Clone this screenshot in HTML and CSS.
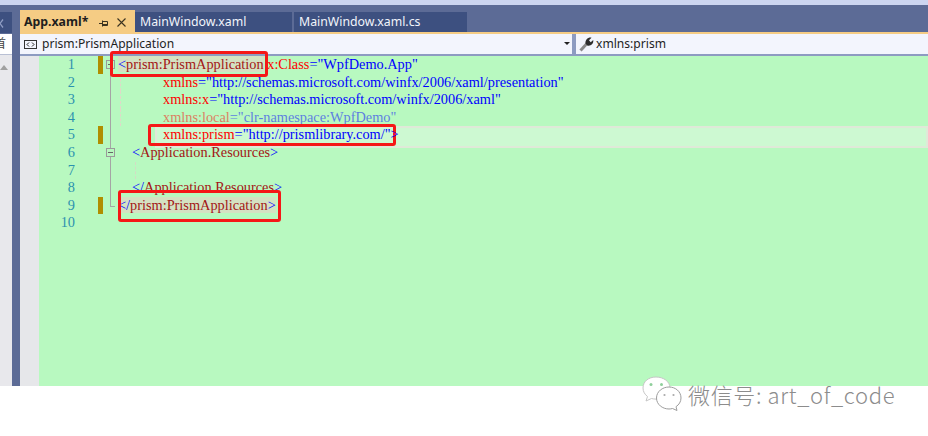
FILE: index.html
```html
<!DOCTYPE html>
<html lang="zh">
<head>
<meta charset="utf-8">
<title>App.xaml</title>
<link rel="stylesheet" href="styles.css">
</head>
<body>
<div class="shot">
  <div class="topstrip"></div>
  <div class="ide">
    <aside class="side">
      <div class="side-top">
        <div class="side-tab">
          <svg class="side-x" width="8" height="9" viewBox="0 0 8 9"><path d="M1 .5l6 8M7 .5l-6 8" stroke="#8f9dc4" stroke-width="1.300" fill="none"/></svg>
        </div>
      </div>
      <div class="side-white"><span class="side-char">首</span></div>
      <div class="side-body"><span class="side-arrow"></span></div>
    </aside>
    <div class="side-sep"></div>
    <main class="doc">
      <div class="tabs">
        <div class="tab active">
          <span class="tab-name">App.xaml*</span>
          <svg class="pin" width="10" height="9" viewBox="0 0 10 9"><path d="M0 4.500h3M3.500 1.500v6M3.500 2.500h5v4h-5M4 5.500h4" stroke="#3b3320" fill="none"/></svg>
          <svg class="close" width="9" height="9" viewBox="0 0 9 9"><path d="M.5.500l8 8M8.500.500l-8 8" stroke="#3b3320" stroke-width="1.100" fill="none"/></svg>
        </div>
        <div class="tab t2">MainWindow.xaml</div>
        <div class="tab t3">MainWindow.xaml.cs</div>
      </div>
      <div class="navbar">
        <div class="nav-left">
          <svg class="nav-ico" width="13" height="9" viewBox="0 0 13 9"><rect x=".5" y=".5" width="12" height="8" fill="#f3f5fd" stroke="#333"/><path d="M5 2.500L3 4.500l2 2M8 2.500l2 2-2 2" stroke="#222" fill="none"/></svg>
          <span>prism:PrismApplication</span>
          <span class="caret"></span>
        </div>
        <div class="nav-right">
          <svg class="wrench" width="15" height="15" viewBox="0 0 15 15"><path d="M1.500 13.500L8 6.500" stroke="#8a8a8a" stroke-width="3"/><path d="M6.500 6.500C6 3 9 0 12.500.7L10 3.300l1.700 2L14.200 3C15 6.500 11.500 9.500 8.300 8.500z" fill="#2d2d2d"/></svg>
          <span>xmlns:prism</span>
        </div>
      </div>
      <div class="editor">
        <div class="margin"></div>
        <div class="code-pane">
          <div class="line"><span class="num">1</span><i class="chg"></i><i class="fold">
            <svg width="9" height="9" viewBox="0 0 9 9"><rect x=".5" y=".5" width="8" height="8" fill="none" stroke="#9a9a9a"/><path d="M2 4.500h5" stroke="#666"/></svg></i><code class="src"><b class="sel"><s>&lt;</s><u>prism:PrismApplication</u></b> <em>x:Class</em><s>="WpfDemo.App"</s></code></div>
          <div class="line"><span class="num">2</span><i class="chg off"></i><i class="fold bar"></i><code class="src ind2 guide"><em>xmlns</em><s>="http://schemas.microsoft.com/winfx/2006/xaml/presentation"</s></code></div>
          <div class="line"><span class="num">3</span><i class="chg off"></i><i class="fold bar"></i><code class="src ind2 guide"><em>xmlns:x</em><s>="http://schemas.microsoft.com/winfx/2006/xaml"</s></code></div>
          <div class="line faded"><span class="num">4</span><i class="chg off"></i><i class="fold bar"></i><code class="src ind2 guide"><em>xmlns:local</em><s>="clr-namespace:WpfDemo"</s></code></div>
          <div class="line cur"><span class="num">5</span><i class="chg"></i><i class="fold bar"></i><code class="src ind2"><em>xmlns:prism</em><s>="http://prismlibrary.com/"&gt;</s></code></div>
          <div class="line"><span class="num">6</span><i class="chg off"></i><i class="fold bar">
            <svg class="fold-ico" width="9" height="9" viewBox="0 0 9 9"><rect x=".5" y=".5" width="8" height="8" fill="#b8f8bf" stroke="#9a9a9a"/><path d="M2 4.500h5" stroke="#666"/></svg></i><code class="src ind1"><s>&lt;</s><u>Application.Resources</u><s>&gt;</s></code></div>
          <div class="line"><span class="num">7</span><i class="chg off"></i><i class="fold bar"></i><code class="src ind1 guide2"></code></div>
          <div class="line"><span class="num">8</span><i class="chg off"></i><i class="fold bar"></i><code class="src ind1"><s>&lt;/</s><u>Application.Resources</u><s>&gt;</s></code></div>
          <div class="line"><span class="num">9</span><i class="chg"></i><i class="fold end"></i><code class="src"><b class="sel"><s>&lt;/</s><u>prism:PrismApplication</u><s>&gt;</s></b></code></div>
          <div class="line"><span class="num">10</span><i class="chg off"></i><i class="fold none"></i><code class="src"></code></div>
        </div>
      </div>
    </main>
  </div>
  <div class="foot"></div>
  <span class="box b1"></span>
  <span class="box b2"></span>
  <span class="box b3"></span>
  <div class="mark">
    <svg class="wechat" width="41" height="35" viewBox="0 0 41 35">
      <path d="M14 1C6.500 1 1 5.500 1 12c0 3.500 1.800 6.500 4.500 8.500L4 25l5.500-2.500c1.400.4 3 .6 4.500.6h2C22 23 28 18.500 28 12S21.500 1 14 1z" fill="#fff" stroke="#c6c6c6"/>
      <path d="M27 11c-6.500 0-12.500 4.500-12.500 11S20.500 33 27 33c1.200 0 2.400-.2 3.500-.5l4.500 2-1-3.800c3-2 5-5 5-8.700 0-6.500-5.500-11-12-11z" fill="#fff" stroke="#9d9d9d"/>
      <circle cx="9" cy="8.500" r="1.500" fill="#8fcf9b"/><circle cx="19.500" cy="8.500" r="1.500" fill="#8fcf9b"/>
      <circle cx="22.500" cy="19" r="1.100" fill="#aaa"/><circle cx="31.500" cy="19" r="1.100" fill="#aaa"/>
    </svg>
    <span class="mark-text">微信号: art_of_code</span>
  </div>
</div>
</body>
</html>
```

FILE: styles.css
```css
* { box-sizing: border-box; }
html, body { margin: 0; padding: 0; background: #fff; }
.shot { position: relative; width: 928px; height: 436px; overflow: hidden; background: #fff; }
.topstrip { height: 5px; background: #ccd5f0; }
.ide { display: flex; height: 381px; background: #5c6b96; }
.side { width: 12px; display: flex; flex-direction: column; }
.side-top { height: 29px; padding-top: 7px; flex: none; }
.side-tab { height: 21px; background: #3d5080; padding-top: 7px; overflow: hidden; }
.side-x { display: block; margin-left: -4px; }
.side-white { height: 20px; flex: none; background: #fff; position: relative; overflow: hidden; }
.side-char { position: absolute; left: -6px; top: 1px; font: 12px/16px "Noto Sans CJK SC", sans-serif; color: #444; }
.side-body { flex: 1; background: #e8e8ec; border-top: 1px solid #b9c0d4; position: relative; overflow: hidden; }
.side-arrow { position: absolute; left: 0; top: 10px; width: 0; height: 0; border: 4px solid transparent; border-bottom: 5px solid #a0a0a0; border-top: 0; }
.side-sep { width: 8px; }
.doc { flex: 1; min-width: 0; display: flex; flex-direction: column; }
.tabs { height: 29px; padding-top: 7px; display: flex; align-items: stretch; border-bottom: 2px solid #f5cc84; flex: none; }
.tab { height: 20px; background: #3d5080; color: #f2f4fb; font: 12.300px/19px "Noto Sans", "Open Sans", sans-serif; padding-left: 5px; margin-right: 2px; }
.tab.active { width: 115px; height: 22px; margin-top: -2px; padding: 2px 0 0 4px; margin-right: 0; background: #f5cc84; color: #1e1e1e; font-weight: 700; display: flex; align-items: flex-start; }
.tab-name { width: 75px; }
.pin { margin: 7px 8px 0 0; }
.close { margin-top: 6px; }
.t2 { width: 157px; }
.t3 { width: 173px; margin-right: 0; }
.navbar { height: 22px; flex: none; display: flex; background: #f3f5fd; border-bottom: 2px solid #8d9bc1; font: 12.100px/18px "Noto Sans", "Open Sans", sans-serif; color: #1e1e1e; }
.nav-left { width: 552px; display: flex; align-items: center; padding-left: 4px; position: relative; }
.nav-ico { margin-right: 5px; }
.caret { position: absolute; right: 2px; top: 8px; border: 3px solid transparent; border-top: 3px solid #222; border-bottom: 0; }
.nav-right { flex: 1; display: flex; align-items: center; padding-left: 3px; border-left: 4px solid #8d9bc1; gap: 2px; }
.wrench { flex: none; }
.editor { flex: 1; display: flex; background: #b8f9c0; }
.margin { width: 19px; background: #e6e7ea; }
.code-pane { flex: 1; }
.line { display: flex; height: 17.600px; font: 14.320px/17px "Liberation Serif", serif; position: relative; }
.num { width: 36px; text-align: right; color: #2b91af; }
.chg { width: 5px; margin-left: 23px; background: #b08e00; }
.chg.off { background: none; }
.fold { width: 9px; margin-left: 3px; margin-right: 1px; position: relative; flex: none; }
.fold svg { position: absolute; left: 0; top: 4px; }
.fold.bar::before { content: ""; position: absolute; left: 4px; top: 0; bottom: 0; border-left: 1px solid #a5a5a5; }
.fold.end::before { content: ""; position: absolute; left: 4px; top: 0; height: 9px; width: 4px; border: 1px solid #a5a5a5; border-width: 0 0 1px 1px; }
.fold.none { border: 0; }
.fold .fold-ico { z-index: 1; }
.src { font: inherit; white-space: pre; padding-left: 2px; position: relative; }
.ind2 { padding-left: 47px; }
.ind1 { padding-left: 16px; }
.guide::before { content: ""; position: absolute; left: 4px; top: 0; bottom: 0; border-left: 1px dashed #e0d8c8; }
.guide2::before { content: ""; position: absolute; left: 19px; top: 0; bottom: 0; border-left: 1px dashed #d3dcc4; }
.src s { text-decoration: none; color: #0000ff; }
.src u { text-decoration: none; color: #a31515; }
.src em { font-style: normal; color: #ff0000; }
.sel { font-weight: 400; background: #d4e2c2; }
.faded em, .faded s { opacity: .5; }
.cur::after { content: ""; position: absolute; left: 116px; right: 0; top: 0; height: 18px; border: 2px solid #dfe9d8; background: #cdf9d2; z-index: 0; }
.cur .src { z-index: 1; }
.box { position: absolute; border: 3px solid #f51717; border-radius: 3px; }
.b1 { left: 110px; top: 51px; width: 158px; height: 26px; }
.b2 { left: 148px; top: 124px; width: 248px; height: 22px; }
.b3 { left: 118px; top: 190px; width: 163px; height: 32px; }
.mark { position: absolute; left: 642px; top: 376px; display: flex; align-items: center; gap: 5px; }
.wechat { flex: none; }
.mark-text { font: 300 22px/30px "Noto Sans CJK SC", sans-serif; color: #8c8c8c; letter-spacing: .65px; }
```
